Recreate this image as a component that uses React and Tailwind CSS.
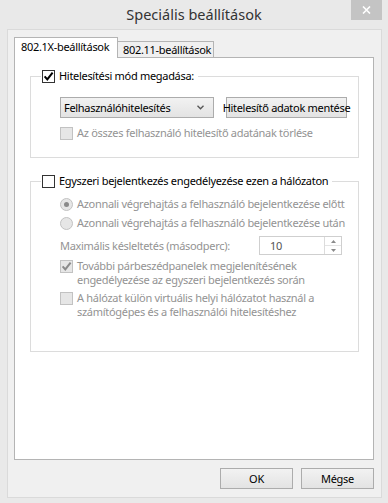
import React from "react";

// small win8-ish controls

function Box({ checked, disabled }) {
  return (
    <span
      className={`w-[13px] h-[13px] shrink-0 border flex items-center justify-center ${
        disabled ? "border-[#c2c2c2] bg-[#e6e6e6]" : "border-[#333333] bg-white"
      }`}
    >
      {checked && (
        <svg width="11" height="11" viewBox="0 0 11 11">
          <path
            d="M1.6 5.4 L4.3 8.4 L9.6 1.6"
            fill="none"
            stroke={disabled ? "#8a8a8a" : "#000000"}
            strokeWidth="2"
          />
        </svg>
      )}
    </span>
  );
}

function Radio({ on }) {
  return (
    <span className="w-[13px] h-[13px] shrink-0 rounded-full border border-[#c2c2c2] bg-[#e6e6e6] flex items-center justify-center">
      {on && <span className="w-[5px] h-[5px] rounded-full bg-[#8a8a8a]" />}
    </span>
  );
}

function Btn({ children, className = "" }) {
  return (
    <div
      className={`h-[21px] border border-[#acacac] bg-linear-to-b from-[#f2f2f2] to-[#e3e3e3] text-black flex items-center justify-center ${className}`}
    >
      {children}
    </div>
  );
}

export default function App() {
  return (
    <div className="w-[388px] h-[503px] bg-[#e9e9e9] flex flex-col whitespace-nowrap text-[11px] leading-[14px] tracking-[-0.3px] font-['Noto_Sans',sans-serif]">
      {/* title bar */}
      <div className="relative h-[29px] flex items-center justify-center pb-[1px] text-[14.5px] tracking-normal text-[#333333]">
        Speciális beállítások
        <div className="absolute top-0 right-[6px] w-[31px] h-[20px] bg-[#c4c4c4] flex items-center justify-center">
          <svg width="9" height="8" viewBox="0 0 9 8">
            <path d="M1 0.5 L8 7.5 M8 0.5 L1 7.5" stroke="#ffffff" strokeWidth="1.6" />
          </svg>
        </div>
      </div>

      {/* client */}
      <div className="ml-[7px] w-[375px] h-[469px] border border-[#dadada] bg-[#f0f0f0] pl-[6px] pt-[7px]">
        {/* tabs */}
        <div className="flex items-end h-[20px]">
          <div className="relative z-10 w-[104px] h-[21px] -mb-px border-x border-t border-[#b4b4b4] bg-white flex items-center pl-[6px] pb-[2px] text-black">
            802.1X-beállítások
          </div>
          <div className="w-[96px] h-[16px] border-t border-r border-[#b4b4b4] bg-[#f0f0f0] flex items-center pl-[5px] text-black">
            802.11-beállítások
          </div>
        </div>

        {/* panel */}
        <div className="w-[360px] h-[403px] border border-[#b4b4b4] bg-white pl-[15px] pt-[10px]">
          <fieldset className="w-[329px] h-[90px] border border-[#dcdcdc]">
            <legend className="ml-[10px] pl-[1px] pr-[4px] h-[16px] flex items-center gap-[4px] text-black">
              <Box checked />
              <span>Hitelesítési mód megadása:</span>
            </legend>
            <div className="pl-[29px]">
              <div className="mt-[13px] flex gap-[12px]">
                <div className="w-[154px] h-[21px] border border-[#acacac] bg-linear-to-b from-[#f2f2f2] to-[#e3e3e3] flex items-center justify-between pl-[3px] pr-[9px] text-black">
                  <span>Felhasználóhitelesítés</span>
                  <svg width="7" height="5" viewBox="0 0 7 5">
                    <path d="M0.5 0.8 L3.5 3.8 L6.5 0.8" fill="none" stroke="#555555" strokeWidth="1.3" />
                  </svg>
                </div>
                <Btn className="w-[121px]">Hitelesítő adatok mentése</Btn>
              </div>
              <div className="mt-[7px] h-[16px] flex items-center gap-[4px] text-[#939393]">
                <Box disabled />
                <span>Az összes felhasználó hitelesítő adatának törlése</span>
              </div>
            </div>
          </fieldset>

          <fieldset className="mt-[15px] w-[329px] h-[179px] border border-[#dcdcdc]">
            <legend className="ml-[10px] pl-[1px] pr-[4px] h-[16px] flex items-center gap-[4px] text-black">
              <Box />
              <span>Egyszeri bejelentkezés engedélyezése ezen a hálózaton</span>
            </legend>
            <div className="pl-[29px]">
              <div className="mt-[7px] h-[16px] flex items-center gap-[4px] text-[#939393]">
                <Radio on />
                <span>Azonnali végrehajtás a felhasználó bejelentkezése előtt</span>
              </div>
              <div className="mt-[3px] h-[16px] flex items-center gap-[4px] text-[#939393]">
                <Radio />
                <span>Azonnali végrehajtás a felhasználó bejelentkezése után</span>
              </div>
              <div className="mt-[5px] h-[19px] flex items-center text-[#939393]">
                <span className="w-[199px]">Maximális késleltetés (másodperc):</span>
                <div className="w-[83px] h-[19px] border border-[#cfcfcf] bg-white flex items-center">
                  <span className="flex-1 pl-[10px] text-[#555555]">10</span>
                  <div className="w-[17px] h-full border-l border-[#dcdcdc] flex flex-col">
                    <div className="flex-1 flex items-center justify-center">
                      <svg width="5" height="3" viewBox="0 0 5 3">
                        <path d="M0 3 L2.5 0 L5 3 Z" fill="#8a8a8a" />
                      </svg>
                    </div>
                    <div className="flex-1 flex items-center justify-center border-t border-[#e4e4e4]">
                      <svg width="5" height="3" viewBox="0 0 5 3">
                        <path d="M0 0 L2.5 3 L5 0 Z" fill="#8a8a8a" />
                      </svg>
                    </div>
                  </div>
                </div>
              </div>
              <div className="mt-[4px] flex items-start gap-[4px] text-[#939393]">
                <span className="mt-[1px]">
                  <Box checked disabled />
                </span>
                <span className="leading-[13.5px]">
                  További párbeszédpanelek megjelenítésének
                  <br />
                  engedélyezése az egyszeri bejelentkezés során
                </span>
              </div>
              <div className="mt-[5px] flex items-start gap-[4px] text-[#939393]">
                <span className="mt-[1px]">
                  <Box disabled />
                </span>
                <span className="leading-[13.5px]">
                  A hálózat külön virtuális helyi hálózatot használ a
                  <br />
                  számítógépes és a felhasználói hitelesítéshez
                </span>
              </div>
            </div>
          </fieldset>
        </div>

        {/* dialog buttons */}
        <div className="w-[360px] mt-[8px] flex justify-end gap-[8px]">
          <Btn className="w-[73px]">OK</Btn>
          <Btn className="w-[73px]">Mégse</Btn>
        </div>
      </div>
    </div>
  );
}
